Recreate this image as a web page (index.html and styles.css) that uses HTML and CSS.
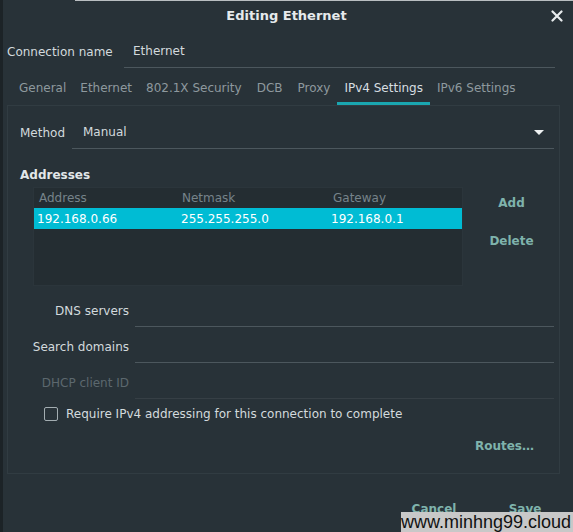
FILE: index.html
```html
<!DOCTYPE html>
<html lang="en">
<head>
  <meta charset="UTF-8">
  <meta name="viewport" content="width=device-width, initial-scale=1.0">
  <title>Editing Ethernet</title>
  <link rel="stylesheet" href="styles.css">
</head>
<body>
  <div class="ne-window">
    <div class="ne-edge"><span></span></div>

    <!-- Title bar -->
    <div class="ne-titlebar">
      <span class="ne-title">Editing Ethernet</span>
      <button class="ne-close" aria-label="Close">
        <svg width="12" height="12" viewBox="0 0 12 12">
          <path d="M1.5 1.5 L10.5 10.5 M10.5 1.5 L1.5 10.5" stroke="#e8ecee" stroke-width="2.2" stroke-linecap="round" fill="none"/>
        </svg>
      </button>
    </div>

    <!-- Connection name -->
    <div class="ne-conn-row">
      <label class="ne-conn-label">Connection name</label>
      <div class="ne-entry ne-conn-entry">Ethernet</div>
    </div>

    <!-- Tabs -->
    <div class="ne-tabs">
      <span class="ne-tab">General</span>
      <span class="ne-tab">Ethernet</span>
      <span class="ne-tab">802.1X Security</span>
      <span class="ne-tab">DCB</span>
      <span class="ne-tab">Proxy</span>
      <span class="ne-tab active">IPv4 Settings</span>
      <span class="ne-tab">IPv6 Settings</span>
    </div>

    <div class="ne-page">
      <div class="ne-method-row">
        <label class="ne-method-label">Method</label>
        <div class="ne-entry ne-combo">
          <span>Manual</span>
          <span class="ne-arrow"></span>
        </div>
      </div>

      <h3 class="ne-heading">Addresses</h3>

      <div class="ne-addresses">
        <div class="ne-list">
          <div class="ne-list-row ne-list-head">
            <span>Address</span><span>Netmask</span><span>Gateway</span>
          </div>
          <div class="ne-list-row selected">
            <span>192.168.0.66</span><span>255.255.255.0</span><span>192.168.0.1</span>
          </div>
        </div>
        <div class="ne-list-buttons">
          <button class="ne-flat">Add</button>
          <button class="ne-flat">Delete</button>
        </div>
      </div>

      <div class="ne-form">
        <label>DNS servers</label>
        <div class="ne-entry"></div>
        <label>Search domains</label>
        <div class="ne-entry"></div>
        <label class="disabled">DHCP client ID</label>
        <div class="ne-entry disabled"></div>
      </div>

      <div class="ne-check-row">
        <span class="ne-checkbox"></span>
        <span>Require IPv4 addressing for this connection to complete</span>
      </div>

      <div class="ne-routes-row">
        <button class="ne-flat">Routes…</button>
      </div>
    </div>

    <!-- Dialog buttons -->
    <div class="ne-actions">
      <button class="ne-flat">Cancel</button>
      <button class="ne-flat">Save</button>
    </div>

    <div class="ne-watermark">www.minhng99.cloud</div>
  </div>
</body>
</html>
```

FILE: styles.css
```css
* {
  margin: 0;
  padding: 0;
  box-sizing: border-box;
}

body {
  background: #1d252a;
  font-family: "DejaVu Sans", sans-serif;
  font-size: 12px;
  color: #d3dadd;
  overflow: hidden;
}

button {
  font-family: inherit;
  background: none;
  border: none;
  cursor: pointer;
}

.ne-window {
  position: relative;
  width: 573px;
  height: 532px;
  background: #283238;
  border-left: 3px solid #1c2327;
}

/* thin strip of the window behind */
.ne-edge {
  height: 1px;
  display: flex;
}

.ne-edge span {
  margin-left: 72px;
  flex: 1;
  background: #b9bec1;
}

.ne-titlebar {
  height: 29px;
  display: flex;
  align-items: center;
  justify-content: center;
  position: relative;
}

.ne-title {
  font-size: 13px;
  font-weight: bold;
  color: #e6eaec;
  margin-left: -3px;
}

.ne-close {
  position: absolute;
  right: 9px;
  top: 8px;
  width: 14px;
  height: 14px;
  display: flex;
  align-items: center;
  justify-content: center;
}

.ne-conn-row {
  display: flex;
  height: 33px;
  margin-top: 5px;
  padding-left: 4px;
  padding-right: 18px;
}

.ne-conn-label {
  width: 117px;
  display: flex;
  align-items: center;
}

.ne-entry {
  flex: 1;
  display: flex;
  align-items: center;
  border-bottom: 1px solid #4c575d;
}

.ne-conn-entry {
  padding-left: 9px;
}

.ne-tabs {
  display: flex;
  height: 32px;
  margin-top: 5px;
  padding-left: 9px;
}

.ne-tab {
  padding: 0 7px;
  display: flex;
  align-items: center;
  color: #8e999e;
  border-bottom: 3px solid transparent;
}

.ne-tab:nth-child(4) {
  padding: 0 8px;
}

.ne-tab.active {
  color: #d7dee1;
  border-bottom-color: #1aa6b0;
}

.ne-page {
  margin-left: 4px;
  margin-right: 13px;
  border: 1px solid #313c42;
  padding: 10px 5px 15px 12px;
}

.ne-method-row {
  display: flex;
  height: 33px;
}

.ne-method-label {
  width: 52px;
  display: flex;
  align-items: center;
}

.ne-combo {
  padding-left: 11px;
  justify-content: space-between;
  padding-right: 10px;
}

.ne-arrow {
  width: 0;
  height: 0;
  border-left: 5px solid transparent;
  border-right: 5px solid transparent;
  border-top: 5px solid #eef1f2;
}

.ne-heading {
  margin-top: 18px;
  height: 16px;
  font-size: 12px;
  font-weight: bold;
  color: #e2e7e9;
  line-height: 16px;
}

.ne-addresses {
  display: flex;
  margin-top: 4px;
}

.ne-list {
  width: 430px;
  height: 99px;
  margin-left: 13px;
  background: #242d32;
  border: 1px solid #2b353b;
}

.ne-list-row {
  display: grid;
  grid-template-columns: 144px 150px 1fr;
  height: 20px;
  align-items: center;
  padding-left: 3px;
}

.ne-list-head {
  color: #76838a;
  padding-left: 5px;
  grid-template-columns: 143px 151px 1fr;
}

.ne-list-row.selected {
  background: #00bcd4;
  color: #ffffff;
  height: 21px;
}

.ne-list-buttons {
  flex: 1;
  display: flex;
  flex-direction: column;
  gap: 2px;
  margin-top: -2px;
  padding-left: 6px;
}

.ne-flat {
  height: 36px;
  font-size: 12px;
  font-weight: bold;
  color: #7fb3ac;
}

.ne-form {
  display: grid;
  grid-template-columns: 109px 1fr;
  grid-auto-rows: 32px;
  column-gap: 6px;
  row-gap: 4px;
  margin-top: 9px;
}

.ne-form label {
  display: flex;
  align-items: center;
  justify-content: flex-end;
}

.ne-form label.disabled {
  color: #5c686e;
}

.ne-form .ne-entry.disabled {
  border-bottom-color: #363f45;
}

.ne-check-row {
  display: flex;
  align-items: center;
  gap: 8px;
  height: 16px;
  margin-top: 7px;
  padding-left: 24px;
}

.ne-checkbox {
  width: 14px;
  height: 14px;
  border: 1.5px solid #a3adb1;
  border-radius: 2px;
}

.ne-routes-row {
  display: flex;
  justify-content: flex-end;
  height: 24px;
  margin-top: 12px;
  padding-right: 12px;
}

.ne-routes-row .ne-flat {
  height: 24px;
  padding: 0 8px;
}

.ne-actions {
  display: flex;
  justify-content: flex-end;
  gap: 11px;
  margin-top: 17px;
  padding-right: 8px;
}

.ne-actions .ne-flat {
  width: 80px;
}

.ne-watermark {
  position: absolute;
  right: 0;
  bottom: 0;
  width: 172px;
  height: 20px;
  background: #c8c8c8;
  color: #111;
  font-family: "Liberation Sans", Arial, sans-serif;
  font-size: 18px;
  line-height: 20px;
  text-align: right;
  padding-right: 2px;
}
```
